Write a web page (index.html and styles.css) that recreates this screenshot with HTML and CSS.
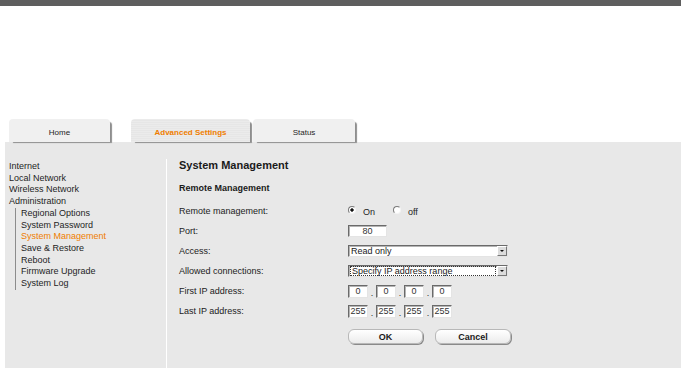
FILE: index.html
```html
<!DOCTYPE html>
<html lang="en">
<head>
    <meta charset="UTF-8">
    <meta name="viewport" content="width=device-width, initial-scale=1.0">
    <title>System Management</title>
    <link rel="stylesheet" href="styles.css">
</head>
<body>
    <div class="topbar"></div>

    <!-- Pestañas principales -->
    <div class="tabs">
        <div class="tab tab-home">Home</div>
        <div class="tab tab-advanced active">Advanced Settings</div>
        <div class="tab tab-status">Status</div>
    </div>

    <div class="panel">
        <!-- Menú lateral -->
        <div class="sidebar">
            <ul class="menu">
                <li>Internet</li>
                <li>Local Network</li>
                <li>Wireless Network</li>
                <li>Administration</li>
            </ul>
            <ul class="submenu">
                <li>Regional Options</li>
                <li>System Password</li>
                <li class="current">System Management</li>
                <li>Save &amp; Restore</li>
                <li>Reboot</li>
                <li>Firmware Upgrade</li>
                <li>System Log</li>
            </ul>
        </div>

        <!-- Contenido -->
        <div class="content">
            <h1>System Management</h1>
            <h2>Remote Management</h2>

            <div class="form">
                <div class="label">Remote management:</div>
                <div class="control">
                    <span class="radio checked"></span><span class="radio-text">On</span>
                    <span class="radio radio-off"></span><span class="radio-text">off</span>
                </div>

                <div class="label">Port:</div>
                <div class="control">
                    <div class="field port">80</div>
                </div>

                <div class="label">Access:</div>
                <div class="control">
                    <div class="select">
                        <div class="select-value">Read only</div>
                        <div class="select-arrow"></div>
                    </div>
                </div>

                <div class="label">Allowed connections:</div>
                <div class="control">
                    <div class="select">
                        <div class="select-value focused">Specify IP address range</div>
                        <div class="select-arrow"></div>
                    </div>
                </div>

                <div class="label">First IP address:</div>
                <div class="control ip">
                    <div class="field octet">0</div><span class="dot">.</span>
                    <div class="field octet">0</div><span class="dot">.</span>
                    <div class="field octet">0</div><span class="dot">.</span>
                    <div class="field octet">0</div>
                </div>

                <div class="label">Last IP address:</div>
                <div class="control ip">
                    <div class="field octet">255</div><span class="dot">.</span>
                    <div class="field octet">255</div><span class="dot">.</span>
                    <div class="field octet">255</div><span class="dot">.</span>
                    <div class="field octet">255</div>
                </div>
            </div>

            <div class="buttons">
                <button class="btn btn-ok">OK</button>
                <button class="btn btn-cancel">Cancel</button>
            </div>
        </div>
    </div>
</body>
</html>
```

FILE: styles.css
```css
body {
    margin: 0;
    font-family: "Liberation Sans", Arial, sans-serif;
    font-size: 9px;
    color: #1e1e1e;
    background: #fff;
}

.topbar {
    height: 6px;
    background: #5e5e5e;
}

/* Pestañas */
.tabs {
    display: flex;
    margin-top: 113px;
    height: 23px;
}

.tab {
    box-sizing: border-box;
    height: 23px;
    padding-top: 4px;
    line-height: 20px;
    font-size: 8px;
    text-align: center;
    background: #f0f0f0;
    border-radius: 4px 4px 0 0;
    box-shadow: 3px 2px 1px -1px #8e8e8e;
}

.tab-home {
    margin-left: 9px;
    width: 101px;
}

.tab-advanced {
    margin-left: 21px;
    width: 119px;
}

.tab-status {
    margin-left: 3px;
    width: 102px;
}

.tab.active {
    background: repeating-linear-gradient(#ebebeb 0, #ebebeb 1px, #e6e6e6 1px, #e6e6e6 2px);
    color: #ef7d00;
    font-weight: bold;
}

/* Panel */
.panel {
    display: flex;
    margin-left: 5px;
    height: 226px;
    background: #e8e8e8;
}

.sidebar {
    box-sizing: border-box;
    width: 162px;
    margin-top: 17px;
    padding: 2px 0 0 4px;
    border-right: 1px solid #fff;
}

.menu, .submenu {
    list-style: none;
    margin: 0;
    padding: 0;
}

.menu li, .submenu li {
    line-height: 11.7px;
    white-space: nowrap;
}

.submenu {
    margin-left: 6px;
    padding-left: 5px;
    border-left: 1px solid #8c8c8c;
}

.submenu .current {
    color: #ef7d00;
}

/* Contenido */
.content {
    flex: 1;
    padding: 16px 0 0 12px;
}

h1 {
    margin: 0;
    font-size: 11px;
    line-height: 14px;
    color: #1a1a1a;
}

h2 {
    margin: 10px 0 0;
    font-size: 9px;
    line-height: 12px;
    color: #1a1a1a;
}

.form {
    display: grid;
    grid-template-columns: 169px auto;
    grid-auto-rows: 20px;
    align-items: center;
    margin-top: 7px;
}

.label {
    color: #222;
}

.control {
    display: flex;
    align-items: center;
}

.radio {
    box-sizing: border-box;
    width: 8px;
    height: 8px;
    border-radius: 50%;
    border: 1px solid;
    border-color: #7a7a7a #f4f4f4 #f4f4f4 #7a7a7a;
    background: #fff;
    margin-top: -2px;
}

.radio.checked {
    background: radial-gradient(circle, #111 1.4px, #fff 1.9px);
}

.radio-off {
    margin-left: 18px;
}

.radio-text {
    margin-left: 7px;
    margin-top: 2px;
}

.field {
    box-sizing: border-box;
    height: 12px;
    line-height: 10px;
    text-align: center;
    background: #fff;
    border: 1px solid;
    border-color: #6a6a6a #e4e4e4 #e4e4e4 #6a6a6a;
    box-shadow: inset 1px 1px 0 #b4b4b4;
    color: #333;
}

.port {
    width: 39px;
}

.select {
    box-sizing: border-box;
    display: flex;
    width: 160px;
    height: 12px;
    background: #fff;
    border: 1px solid;
    border-color: #6a6a6a #e4e4e4 #e4e4e4 #6a6a6a;
    box-shadow: inset 1px 1px 0 #b4b4b4;
}

.select-value {
    flex: 1;
    padding-left: 2px;
    line-height: 10px;
    color: #1a1a1a;
}

.select-value.focused {
    outline: 1px dotted #333;
    outline-offset: -1px;
    margin: 0 1px 0 1px;
}

.select-arrow {
    position: relative;
    box-sizing: border-box;
    width: 10px;
    height: 10px;
    background: #dcdcdc;
    border: 1px solid;
    border-color: #fff #777 #777 #fff;
}

.select-arrow::after {
    content: "";
    position: absolute;
    left: 1.5px;
    top: 3px;
    border-left: 2.5px solid transparent;
    border-right: 2.5px solid transparent;
    border-top: 2.5px solid #111;
}

.ip .octet {
    width: 20px;
    height: 13px;
    line-height: 11px;
}

.dot {
    width: 8px;
    text-align: center;
    margin-top: 4px;
}

.buttons {
    display: flex;
    gap: 12px;
    margin-top: 8px;
    padding-left: 169px;
}

.btn {
    box-sizing: border-box;
    width: 75px;
    height: 15px;
    padding: 0;
    font-family: "Liberation Sans", Arial, sans-serif;
    font-size: 9px;
    font-weight: bold;
    color: #1a1a1a;
    background: linear-gradient(#ffffff, #ececec);
    border: 1px solid #b8b8b8;
    border-radius: 6px;
    box-shadow: 1px 1px 0 #8a8a8a;
}

.btn-cancel {
    width: 76px;
}
```
